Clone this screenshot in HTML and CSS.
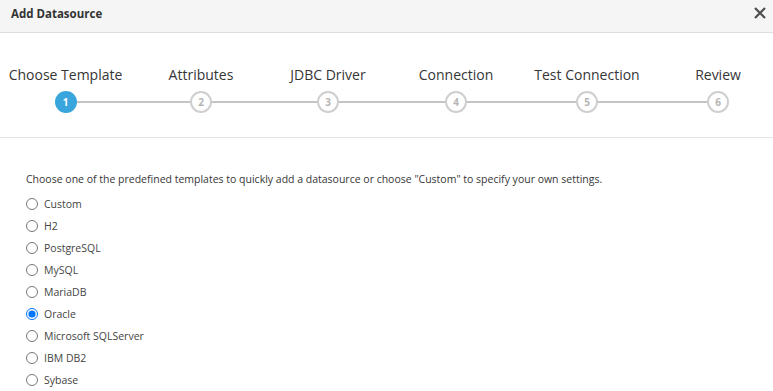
FILE: index.html
```html
<!DOCTYPE html>
<html lang="en">
<head>
    <meta charset="utf-8">
    <title>Add Datasource</title>
    <link rel="stylesheet" href="styles.css">
</head>
<body>
    <div class="modal">
        <div class="modal-header">
            <h4>Add Datasource</h4>
            <button class="close" aria-label="Close">
                <svg width="12" height="12" viewBox="0 0 12 12">
                    <path d="M1 1 L11 11 M11 1 L1 11" stroke="#4d4d4d" stroke-width="2.2" fill="none"/>
                </svg>
            </button>
        </div>

        <div class="steps">
            <div class="step-track"></div>
            <div class="step active">
                <span class="step-label">Choose Template</span>
                <span class="step-num">1</span>
            </div>
            <div class="step">
                <span class="step-label">Attributes</span>
                <span class="step-num">2</span>
            </div>
            <div class="step">
                <span class="step-label">JDBC Driver</span>
                <span class="step-num">3</span>
            </div>
            <div class="step">
                <span class="step-label">Connection</span>
                <span class="step-num">4</span>
            </div>
            <div class="step">
                <span class="step-label">Test Connection</span>
                <span class="step-num">5</span>
            </div>
            <div class="step">
                <span class="step-label">Review</span>
                <span class="step-num">6</span>
            </div>
        </div>

        <div class="wizard-body">
            <p>Choose one of the predefined templates to quickly add a datasource or choose "Custom" to specify your own settings.</p>
            <form class="templates">
                <label class="radio"><input type="radio" name="template"> Custom</label>
                <label class="radio"><input type="radio" name="template"> H2</label>
                <label class="radio"><input type="radio" name="template"> PostgreSQL</label>
                <label class="radio"><input type="radio" name="template"> MySQL</label>
                <label class="radio"><input type="radio" name="template"> MariaDB</label>
                <label class="radio"><input type="radio" name="template" checked> Oracle</label>
                <label class="radio"><input type="radio" name="template"> Microsoft SQLServer</label>
                <label class="radio"><input type="radio" name="template"> IBM DB2</label>
                <label class="radio"><input type="radio" name="template"> Sybase</label>
            </form>
        </div>
    </div>
</body>
</html>
```

FILE: styles.css
```css
body {
    margin: 0;
    font-family: 'Open Sans', sans-serif;
    color: #363636;
    background: #fff;
    overflow: hidden;
}

.modal {
    width: 773px;
    overflow: hidden;
}

.modal-header {
    height: 32px;
    background: #f5f5f5;
    border-bottom: 1px solid #dedede;
    display: flex;
    align-items: center;
    justify-content: space-between;
    padding: 0 6px 0 11px;
}

.modal-header h4 {
    margin: 0;
    font-size: 11.5px;
    font-weight: 700;
    color: #333;
    line-height: 1;
    margin-top: -5px;
}

.close {
    border: none;
    background: none;
    padding: 0;
    width: 14px;
    height: 14px;
    display: flex;
    align-items: center;
    justify-content: center;
    margin-top: -6px;
    cursor: pointer;
}

/* wizard steps */
.steps {
    position: relative;
    display: grid;
    grid-template-columns: 131px 140px 114px 142px 120px 142px;
    padding: 32px 0 24px;
    border-bottom: 1px solid #e3e3e3;
    width: 789px;
}

.step-track {
    position: absolute;
    left: 65px;
    width: 652px;
    top: 68px;
    height: 2px;
    background: #c4c4c4;
}

.step {
    display: flex;
    flex-direction: column;
    align-items: center;
    gap: 6px;
}

.step-label {
    font-size: 14px;
    line-height: 20px;
    color: #363636;
    white-space: nowrap;
}

.step-num {
    position: relative;
    width: 22px;
    height: 22px;
    box-sizing: border-box;
    border-radius: 50%;
    border: 2px solid #cfcfcf;
    background: #fff;
    color: #b5b5b5;
    font-size: 10px;
    font-weight: 700;
    display: flex;
    align-items: center;
    justify-content: center;
}

.step.active .step-num {
    background: #39a5dc;
    border-color: #39a5dc;
    color: #fff;
}

/* body */
.wizard-body {
    padding: 32px 26px 0;
}

.wizard-body p {
    margin: 0 0 5px;
    font-size: 10.5px;
    line-height: 18px;
    color: #363636;
}

.templates {
    display: flex;
    flex-direction: column;
}

.radio {
    display: flex;
    align-items: center;
    gap: 6px;
    height: 22px;
    font-size: 10.5px;
    color: #444;
}

.radio input {
    margin: 0;
    width: 12px;
    height: 12px;
}
```
